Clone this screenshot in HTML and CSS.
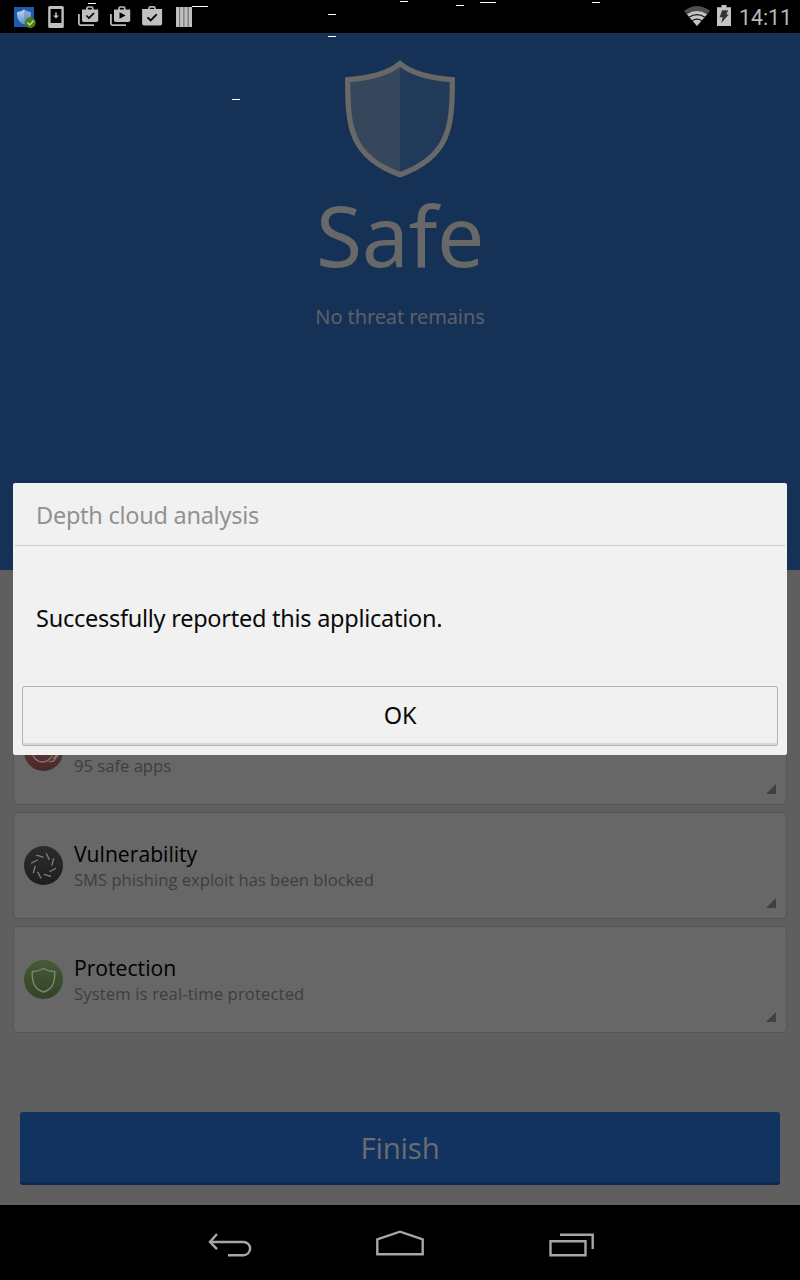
FILE: index.html
```html
<!DOCTYPE html>
<html lang="en">
<head>
<meta charset="utf-8">
<title>Scan result</title>
<link rel="stylesheet" href="styles.css">
</head>
<body>
<div class="screen">
  <header class="status">
    <div class="status-left">
      <svg width="22" height="22" viewBox="0 0 22 22">
        <defs><linearGradient id="sg" x1="0" y1="0" x2="0" y2="1"><stop offset="0" stop-color="#c3d4e7"/><stop offset="1" stop-color="#5c91cd"/></linearGradient></defs>
        <rect width="20" height="20" fill="#1d5bab"/>
        <path d="M10 2.500C8 4.200 6 4.800 3 5c0 6 1 10 7 12.500C16 15 17 11 17 5c-3-.2-5-.8-7-2.500z" fill="url(#sg)"/>
        <path d="M10 2.500C12 4.200 14 4.800 17 5c0 6-1 10-7 12.500z" fill="#4b86c8" opacity=".45"/>
        <circle cx="16.300" cy="15.700" r="5.400" fill="#4c7d05"/>
        <path d="M13.300 15.500l2.400 2.300 4-4.200" fill="none" stroke="#bdcbaa" stroke-width="1.600"/>
      </svg>
      <svg width="16" height="22" viewBox="0 0 16 22">
        <rect width="15.600" height="22" x=".2" rx="1.600" fill="#c0c0c0"/><rect x="2.600" y="3" width="10.800" height="14" fill="#000"/>
        <path d="M7.200 6.500h1.600v3H11L8 12.500 5 9.500h2.200z" fill="#c0c0c0"/>
      </svg>
      <svg width="21" height="21" viewBox="0 0 21 21">
        <path d="M.9 8v9.600a1.500 1.500 0 0 0 1.500 1.500H16" fill="none" stroke="#b8b8b8" stroke-width="1.800"/>
        <path d="M9 4V2.300Q9 1 10.300 1h3.200q1.300 0 1.300 1.300V4" fill="none" stroke="#b8b8b8" stroke-width="1.700"/>
        <path d="M4 3.400h16.200v10.800q0 1.800-1.800 1.800H5.800Q4 16 4 14.200z" fill="#c0c0c0"/>
        <path d="M8.300 9.500l2.700 2.600 5-5.100" fill="none" stroke="#000" stroke-width="1.700"/>
      </svg>
      <svg width="21" height="21" viewBox="0 0 21 21">
        <path d="M.9 8v9.600a1.500 1.500 0 0 0 1.500 1.500H16" fill="none" stroke="#b8b8b8" stroke-width="1.800"/>
        <path d="M9 4V2.300Q9 1 10.300 1h3.200q1.300 0 1.300 1.300V4" fill="none" stroke="#b8b8b8" stroke-width="1.700"/>
        <path d="M4 3.400h16.200v10.800q0 1.800-1.800 1.800H5.800Q4 16 4 14.200z" fill="#c0c0c0"/>
        <path d="M9.500 6.300v6.400l6.200-3.200z" fill="#000"/>
      </svg>
      <svg width="21" height="21" viewBox="0 0 21 21">
        <path d="M7 4V2.300Q7 .9 8.300.9h3.400Q13 .9 13 2.300V4" fill="none" stroke="#b8b8b8" stroke-width="1.700"/>
        <path d="M.1 3h20v14.500q0 2-2 2h-16q-2 0-2-2z" fill="#c0c0c0"/>
        <path d="M5.500 11.300l3.200 3.200 6-6.200" fill="none" stroke="#000" stroke-width="1.900"/>
      </svg>
      <svg width="16" height="20" viewBox="0 0 16 20">
        <rect width="16" height="20" fill="#787878"/><path d="M0 0h3v20H0zM4.200 0h3v20h-3zM8.500 0h3v20h-3zM12.900 0H16v20h-3.100z" fill="#c0c0c0"/>
      </svg>
    </div>
    <div class="status-right">
      <svg width="26" height="20" viewBox="0 0 26 20">
        <path d="M0 4.800Q13-4.800 26 4.800L13 20z" fill="#4e4e4e"/>
        <path d="M2.900 8.300Q13 1.500 23.100 8.300L13 20z" fill="#c4c4c4"/>
        <path d="M5.300 11.100Q13 6 20.700 11.100M8.200 14.700Q13 11.700 17.800 14.700" fill="none" stroke="#111" stroke-width="1.200"/>
      </svg>
      <svg width="14" height="21" viewBox="0 0 14 21">
        <path d="M4.500 0h5v2.200H14V21H0V2.200h4.500z" fill="#c4c4c4"/>
        <path d="M5.100 5.200h6l-1.700 4.300h2.400L4.300 18l1.400-5.800H2.600z" fill="#333"/>
      </svg>
      <span class="clock">14:11</span>
    </div>
  </header>

  <section class="hero">
    <svg class="hero-shield" width="110" height="118" viewBox="0 0 110 118">
      <path d="M55 4C44 14 27 18 3 20c0 51 5 78 52 95z" fill="#36475c"/>
      <path d="M55 4c11 10 28 14 52 16 0 51-5 78-52 95z" fill="#213a5a"/>
      <path d="M55 3.500C43 14 25 18 2.700 19.700 2.500 68 6 97 55 114.700 104 97 107.500 68 107.300 19.700 85 18 67 14 55 3.500z" fill="none" stroke="#686868" stroke-width="5.300"/>
    </svg>
    <h1 class="hero-title">Safe</h1>
    <p class="hero-sub">No threat remains</p>
  </section>

  <main class="content">
    <article class="card">
      <svg class="card-icon" width="39" height="39" viewBox="0 0 39 39">
        <defs><linearGradient id="rg" x1="0" y1="0" x2="0" y2="1"><stop offset="0" stop-color="#663e3e"/><stop offset="1" stop-color="#4a2828"/></linearGradient></defs>
        <circle cx="19.500" cy="19.500" r="19.500" fill="url(#rg)"/>
        <circle cx="18.500" cy="20" r="10" fill="none" stroke="#807474" stroke-width="1.300"/>
        <path d="M25 29.500q5 1 7-4l4-5M29 27l5-6" fill="none" stroke="#807474" stroke-width="1.300"/>
      </svg>
      <div class="card-text"><h2>Virus</h2><p>95 safe apps</p></div>
      <svg class="corner" width="10" height="10"><path d="M10 0v10H0z" fill="#404040"/></svg>
    </article>
    <article class="card">
      <svg class="card-icon" width="39" height="39" viewBox="0 0 39 39">
        <defs><linearGradient id="kg" x1="0" y1="0" x2="0" y2="1"><stop offset="0" stop-color="#2c2c2c"/><stop offset="1" stop-color="#1e1e1e"/></linearGradient></defs>
        <circle cx="19.500" cy="19.500" r="19.500" fill="url(#kg)"/>
        <path d="M12.300 9.100l7 2M22.200 7.200l3.200 6.700M29.700 12.300l-1.900 7.300M32 22.200l-6.500 3.500M27 30.400l-7.200-2M17 32.400l-3.400-6.700M9.300 27l2-7.200M7.200 17.300l6.600-3.600" fill="none" stroke="#808080" stroke-width="1.300"/>
      </svg>
      <div class="card-text"><h2>Vulnerability</h2><p>SMS phishing exploit has been blocked</p></div>
      <svg class="corner" width="10" height="10"><path d="M10 0v10H0z" fill="#404040"/></svg>
    </article>
    <article class="card">
      <svg class="card-icon" width="39" height="39" viewBox="0 0 39 39">
        <defs><linearGradient id="gg" x1="0" y1="0" x2="0" y2="1"><stop offset="0" stop-color="#455b35"/><stop offset="1" stop-color="#334325"/></linearGradient></defs>
        <circle cx="19.500" cy="19.500" r="19.500" fill="url(#gg)"/>
        <path d="M19.500 8.500q-5 3-11.300 3.300C8 22 10 29 19.500 32 29 29 31 22 30.800 11.800 24.500 11.500 22 10 19.500 8.500z" fill="none" stroke="#7c8477" stroke-width="1.400"/>
      </svg>
      <div class="card-text"><h2>Protection</h2><p class="loose">System is real-time protected</p></div>
      <svg class="corner" width="10" height="10"><path d="M10 0v10H0z" fill="#404040"/></svg>
    </article>
    <button class="finish">Finish</button>
  </main>

  <nav class="nav">
    <svg width="44" height="24" viewBox="0 0 44 24">
      <path d="M2 9h33.500a6.600 6.600 0 0 1 0 13.200H20" fill="none" stroke="#a6a6a6" stroke-width="2.400"/>
      <path d="M9 1L2 9l7 7.200" fill="none" stroke="#a6a6a6" stroke-width="2.500"/>
    </svg>
    <svg width="48" height="26" viewBox="0 0 48 26">
      <path d="M1.300 24.300V9.300L24 1.700l22.700 7.600v15z" fill="none" stroke="#a6a6a6" stroke-width="2.400"/>
    </svg>
    <svg width="46" height="24" viewBox="0 0 46 24">
      <path d="M1.500 8.200h35v14h-35zM11 1.700h32.700V16" fill="none" stroke="#a6a6a6" stroke-width="2.400"/>
    </svg>
  </nav>

  <div class="overlay">
    <section class="dialog" role="dialog">
      <h2 class="dialog-title">Depth cloud analysis</h2>
      <p class="dialog-body">Successfully reported this application.</p>
      <button class="dialog-ok">OK</button>
    </section>
  </div>

  <svg class="specks" width="800" height="110" viewBox="0 0 800 110" shape-rendering="crispEdges">
    <path d="M88 3.500h8M192 6.500h16M232 99.500h8M328 14.500h8M328 36.500h8M400 1.500h8M456 5.500h8M480 2.500h16M592 2.500h8" stroke="#fff" stroke-width="1"/>
  </svg>
</div>
</body>
</html>
```
FILE: styles.css
```css
* { box-sizing: border-box; margin: 0; }
body { font-family: "Noto Sans", "Open Sans", sans-serif; background: #000; }
h1, h2, p { font-weight: 400; }
svg { display: block; flex: none; }
button { font-family: inherit; padding: 0; }
.screen { position: relative; width: 800px; height: 1280px; overflow: hidden; display: flex; flex-direction: column; }

.status { height: 33px; flex: none; display: flex; justify-content: space-between; background: #000; }
.status-left { display: flex; align-items: flex-start; padding: 6px 0 0 14px; }
.status-left svg { margin-right: 12px; }
.status-left svg:nth-child(1) { margin-top: 1px; }
.status-left svg:nth-child(2) { margin-right: 14px; }
.status-left svg:nth-child(3), .status-left svg:nth-child(4) { margin-right: 11px; }
.status-left svg:nth-child(5) { margin-right: 13px; }
.status-left svg:nth-child(6) { margin-top: 1px; }
.status-right { display: flex; align-items: flex-start; padding: 5px 9px 0 0; }
.status-right svg:nth-child(1) { margin: 1px 7px 0 0; }
.status-right svg:nth-child(2) { margin-right: 8px; }
.clock { font: 21.300px/25px Roboto, sans-serif; color: #b8b8b8; width: 52px; white-space: nowrap; }

.hero { height: 537px; flex: none; background: #163156; display: flex; flex-direction: column; align-items: center; padding-top: 27px; color: #686868; }
.hero-title { font-size: 84px; line-height: 114px; letter-spacing: -.4px; }
.hero-sub { font-size: 20px; line-height: 28px; margin-top: 11px; color: #5c6168; letter-spacing: -.1px; }

.content { height: 635px; flex: none; background: #5f5f5f; padding: 128px 13px 20px; display: flex; flex-direction: column; gap: 7px; font-family: "Open Sans", sans-serif; }
.card { position: relative; height: 107px; flex: none; display: flex; align-items: center; padding-left: 10px; background: #676767; border: 1px solid #555; border-radius: 5px; }
.card-text { margin-left: 11px; white-space: nowrap; }
.card-text h2 { font-size: 21.150px; line-height: 28px; color: #000; }
.card-text p { font-size: 16.600px; line-height: 24px; color: #3e3e3e; }
.card-text .loose { letter-spacing: .15px; }
.corner { position: absolute; right: 10px; bottom: 10px; }
.finish { margin: auto 7px 0; height: 73px; flex: none; border: 0; border-bottom: 3px solid #0f274a; border-radius: 3px; background: #12335f; color: #6c6c6c; font-size: 29.500px; letter-spacing: -.2px; padding-top: 1px; }

.nav { height: 75px; flex: none; display: flex; align-items: flex-start; background: #000; padding: 28px 0 0 208px; }
.nav svg:nth-child(1) { margin-right: 124px; }
.nav svg:nth-child(2) { margin: -3px 125px 0 0; }

.overlay { position: absolute; inset: 33px 0 75px; display: flex; align-items: center; justify-content: center; }
.dialog { width: 774px; height: 272px; background: #f1f1f1; border-radius: 2px; padding: 0 2px; display: flex; flex-direction: column; font-size: 23.500px; letter-spacing: -.26px; }
.dialog-title { height: 63px; padding-left: 21px; font-size: inherit; line-height: 64px; color: #929292; border-bottom: 1px solid #ccc; }
.dialog-body { height: 140px; padding-left: 21px; line-height: 144px; color: #0a0a0a; }
.dialog-ok { margin: 0 7px; height: 60px; font-size: 23.500px; letter-spacing: -.26px; padding-bottom: 2px; color: #0a0a0a; background: #f1f1f1; border: 1px solid #b5b5b5; border-radius: 2px; box-shadow: inset 0 -2px 1px #d5d5d5; }

.specks { position: absolute; left: 0; top: 0; pointer-events: none; }
```
